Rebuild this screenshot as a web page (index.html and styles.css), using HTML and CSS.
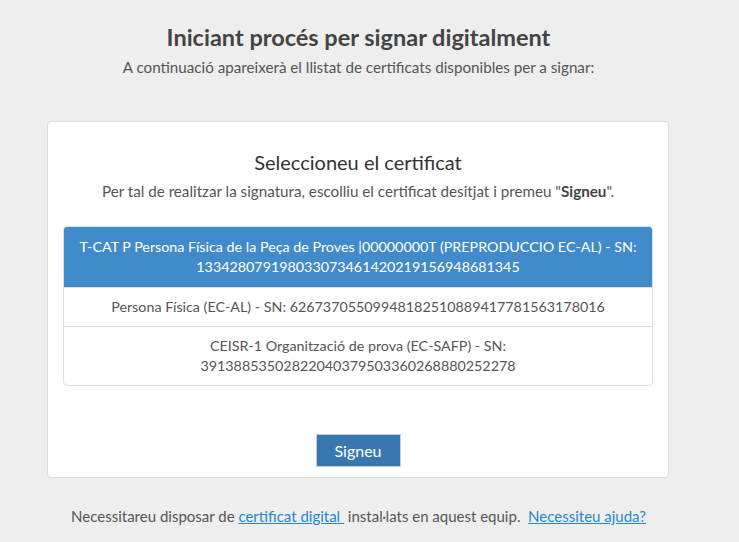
FILE: index.html
```html
<!DOCTYPE html>
<html lang="ca">
<head>
<meta charset="utf-8">
<title>Signatura</title>
<link rel="stylesheet" href="styles.css">
</head>
<body>
<div class="page">
<header class="intro">
  <h1 class="intro-title">Iniciant procés per signar digitalment</h1>
  <p class="intro-text">A continuació apareixerà el llistat de certificats disponibles per a signar:</p>
</header>
<main class="card">
  <h2 class="card-title">Seleccioneu el certificat</h2>
  <p class="card-text">Per tal de realitzar la signatura, escolliu el certificat desitjat i premeu "<strong>Signeu</strong>".</p>
  <ul class="cert-list">
    <li class="cert-item active">T-CAT P Persona Física de la Peça de Proves |00000000T (PREPRODUCCIO EC-AL) - SN: 133428079198033073461420219156948681345</li>
    <li class="cert-item">Persona Física (EC-AL) - SN: 62673705509948182510889417781563178016</li>
    <li class="cert-item">CEISR-1 Organització de prova (EC-SAFP) - SN: 39138853502822040379503360268880252278</li>
  </ul>
  <div class="actions">
    <button class="btn" type="button">Signeu</button>
  </div>
</main>
<footer class="foot">
  Necessitareu disposar de <a href="#" class="link">certificat digital&nbsp;</a> instal·lats en aquest equip. &nbsp;<a href="#" class="link">Necessiteu ajuda?</a>
</footer>
</div>
</body>
</html>
```
FILE: styles.css
```css
html, body {
  margin: 0;
  padding: 0;
}
body {
  background: #eeeeee;
  font-family: Lato, "Open Sans", "Liberation Sans", sans-serif;
  color: #555;
  font-size: 15px;
}
.page {
  width: 717px;
}
.intro {
  text-align: center;
  padding-top: 22px;
}
.intro-title {
  margin: 0;
  font-size: 23.5px;
  font-weight: 700;
  color: #444;
  line-height: 30px;
}
.intro-text {
  margin: 5px 0 0 0;
  font-size: 15.2px;
  line-height: 20px;
  color: #555;
}
.card {
  margin: 44px 0 0 47px;
  width: 590px;
  background: #fff;
  border: 1px solid #dcdcdc;
  border-radius: 4px;
  padding: 27px 15px 10px 15px;
  text-align: center;
}
.card-title {
  margin: 0;
  font-size: 20px;
  font-weight: 400;
  color: #333;
  line-height: 26px;
}
.card-text {
  margin: 6px 0 0 0;
  font-size: 15.2px;
  line-height: 20px;
  color: #555;
}
.card-text strong {
  color: #444;
}
.cert-list {
  list-style: none;
  margin: 25px 0 0 0;
  padding: 0;
  border: 1px solid #ddd;
  border-radius: 4px;
  overflow: hidden;
}
.cert-item {
  padding: 9px 15px;
  font-size: 14.3px;
  line-height: 20px;
  color: #555;
  border-top: 1px solid #ddd;
}
.cert-item:first-child {
  border-top: 0;
}
.cert-item.active {
  background: #428bca;
  color: #fff;
  padding: 10px 15px;
}
.actions {
  margin-top: 48px;
}
.btn {
  font-family: inherit;
  font-size: 16px;
  color: #fff;
  background: #3877af;
  border: 1px solid #c8ccd0;
  width: 85px;
  height: 33px;
  padding: 0;
  cursor: pointer;
}
.foot {
  text-align: center;
  margin-top: 28px;
  font-size: 15px;
  line-height: 20px;
  color: #555;
}
.link {
  color: #1e88d0;
  text-decoration: underline;
}
```
